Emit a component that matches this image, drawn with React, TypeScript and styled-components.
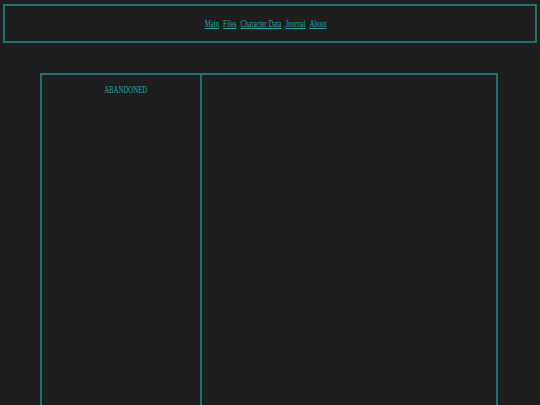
import React from 'react';
import styled, { createGlobalStyle } from 'styled-components';

const TEAL_TEXT = '#24a4a4';
const TEAL_LINE = '#236f6f';

const GlobalStyle = createGlobalStyle`
    html, body {
        background: #1e1e1e;
    }
    body {
        margin: 4px 3px 0;
        font-family: "Liberation Serif", "Times New Roman", serif;
        color: ${TEAL_TEXT};
        overflow: hidden;
    }
`;

const Header = styled.header`
    box-sizing: border-box;
    height: 39px;
    border: 2px solid ${TEAL_LINE};
    display: flex;
    align-items: center;
    justify-content: center;
    padding-right: 8px;
`;

const Nav = styled.nav`
    display: inline-flex;
    gap: 6px;
    font-size: 10px;
    transform: scaleX(0.68);
`;

const NavLink = styled.a`
    color: ${TEAL_TEXT};
    text-decoration: underline;
    cursor: pointer;
`;

const Main = styled.main`
    box-sizing: border-box;
    width: 458px;
    min-height: 420px;
    margin: 30px 0 0 37px;
    border: 2px solid ${TEAL_LINE};
    display: grid;
    grid-template-columns: 160px 1fr;
`;

const Sidebar = styled.aside`
    border-right: 2px solid ${TEAL_LINE};
    padding: 9px 0 0 10px;
    display: flex;
    justify-content: center;
    align-items: flex-start;
`;

const Status = styled.div`
    font-size: 10px;
    transform: scaleX(0.68);
`;

const Content = styled.section``;

const links = ['Main', 'Files', 'Character Data', 'Journal', 'About'];

export default function App() {
    return (
        <>
            <GlobalStyle />
            <Header>
                <Nav>
                    {links.map(label => (
                        <NavLink key={label}>{label}</NavLink>
                    ))}
                </Nav>
            </Header>
            <Main>
                <Sidebar>
                    <Status>ABANDONED</Status>
                </Sidebar>
                <Content />
            </Main>
        </>
    );
}
